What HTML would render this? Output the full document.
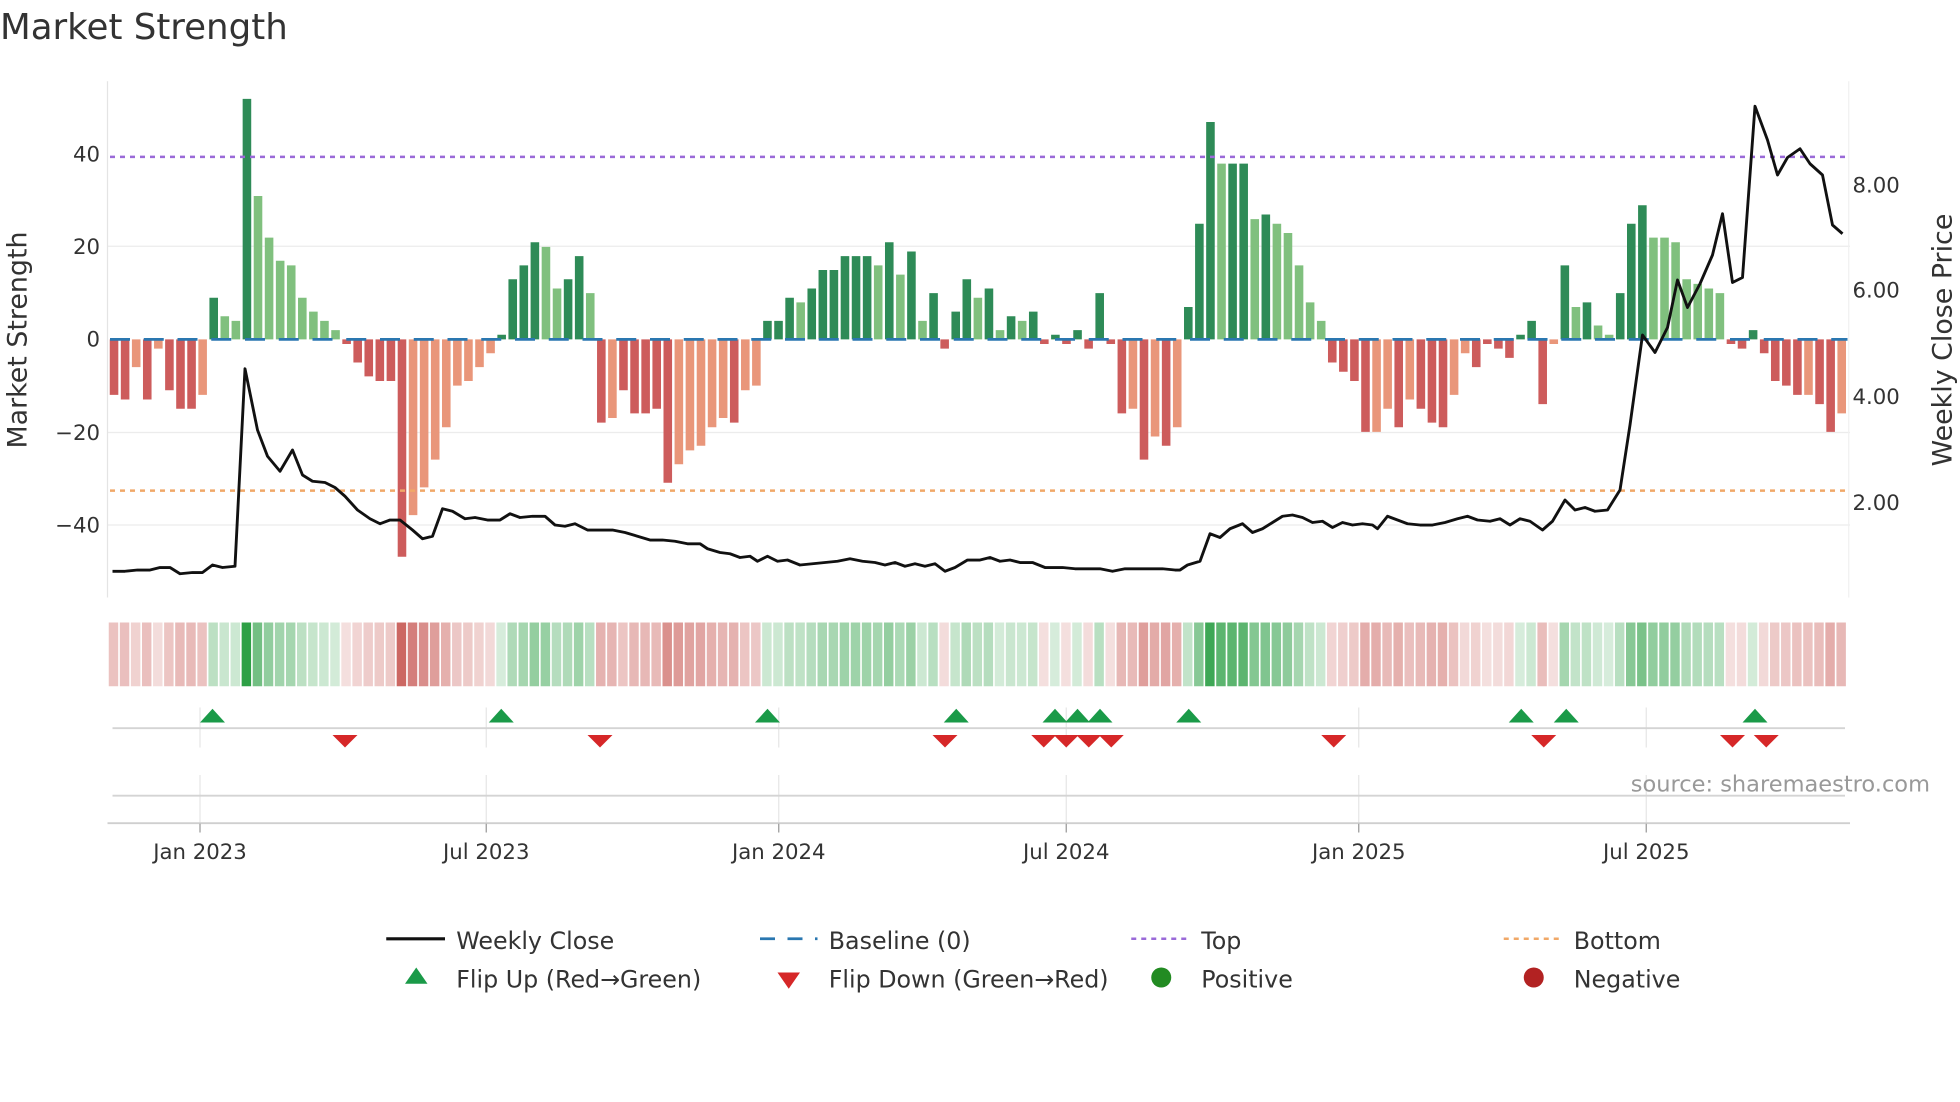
<!DOCTYPE html>
<html><head><meta charset="utf-8"><style>
html,body{margin:0;padding:0;background:#fff;width:1960px;height:1102px;overflow:hidden}
svg{display:block}
text{font-family:"DejaVu Sans","Liberation Sans",sans-serif;fill:#333}
</style></head><body>
<svg id="s" width="1960" height="1102" viewBox="0 0 1568 881.6" xmlns="http://www.w3.org/2000/svg">
<text x="0" y="31" font-size="28.5">Market Strength</text>
<g id="grid" stroke="#ececec" stroke-width="1">
<line x1="86" y1="197" x2="1480" y2="197"/><line x1="86" y1="346" x2="1480" y2="346"/><line x1="86" y1="420" x2="1480" y2="420"/>
</g>
<line x1="86" y1="65" x2="86" y2="478" stroke="#e4e4e4"/>
<line x1="1479" y1="65" x2="1479" y2="478" stroke="#f0f0f0"/>
<g font-size="17" text-anchor="end">
<text x="80" y="129">40</text><text x="80" y="203">20</text><text x="80" y="277">0</text><text x="80" y="352">−20</text><text x="80" y="426">−40</text>
</g>
<g font-size="17">
<text x="1482" y="154">8.00</text><text x="1482" y="238">6.00</text><text x="1482" y="323">4.00</text><text x="1482" y="408">2.00</text>
</g>
<text transform="translate(21,272) rotate(-90)" font-size="21.5" text-anchor="middle">Market Strength</text>
<text transform="translate(1561,272) rotate(-90)" font-size="21.5" text-anchor="middle">Weekly Close Price</text>
<g id="bars"></g>
<line x1="88" y1="271.5" x2="1478" y2="271.5" stroke="#2a77b0" stroke-width="2.2" stroke-dasharray="16,11"/>
<line x1="88" y1="125.5" x2="1478" y2="125.5" stroke="#9a6ad8" stroke-width="2" stroke-dasharray="4,4"/>
<line x1="88" y1="392.5" x2="1478" y2="392.5" stroke="#f0a868" stroke-width="2" stroke-dasharray="4,4"/>
<polyline fill="none" stroke="#111" stroke-width="2.3" stroke-linejoin="round" points="90,457 100,457 110,456 120,456 128,454 136,454 144,459 154,458 162,458 170,452 178,454 188,453 196,295 206,344 214,365 224,377 234,360 242,380 250,385 260,386 268,390 276,397 286,408 296,415 304,419 312,416 320,416 330,424 338,431 346,429 354,407 362,409 372,415 380,414 390,416 400,416 408,411 416,414 426,413 436,413 444,420 452,421 460,419 470,424 478,424 490,424 500,426 510,429 520,432 530,432 540,433 550,435 560,435 566,439 576,442 584,443 592,446 600,445 606,449 614,445 622,449 630,448 640,452 650,451 660,450 670,449 680,447 690,449 700,450 708,452 716,450 724,453 732,451 740,453 748,451 756,457 764,454 774,448 784,448 792,446 800,449 808,448 816,450 826,450 836,454 850,454 860,455 870,455 880,455 890,457 900,455 910,455 920,455 930,455 940,456 944,456 950,452 960,449 968,427 976,430 984,423 994,419 1002,426 1010,423 1018,418 1026,413 1034,412 1042,414 1050,418 1058,417 1066,422 1074,418 1082,420 1090,419 1098,420 1102,423 1110,413 1118,416 1126,419 1136,420 1146,420 1156,418 1166,415 1174,413 1182,416 1192,417 1200,415 1208,420 1216,415 1224,417 1234,424 1242,417 1252,400 1260,408 1268,406 1276,409 1286,408 1296,392 1304,340 1314,268 1324,282 1334,262 1342,224 1350,246 1360,227 1370,204 1378,171 1386,226 1394,222 1404,85 1414,112 1422,140 1430,126 1440,119 1448,131 1458,140 1466,180 1474,187"/>
<g id="heat"></g>
<g stroke="#e6e6e6" stroke-width="1">
<line x1="160" y1="566" x2="160" y2="598"/><line x1="389" y1="566" x2="389" y2="598"/><line x1="623" y1="566" x2="623" y2="598"/><line x1="853" y1="566" x2="853" y2="598"/><line x1="1087" y1="566" x2="1087" y2="598"/><line x1="1317" y1="566" x2="1317" y2="598"/>
<line x1="160" y1="620" x2="160" y2="658"/><line x1="389" y1="620" x2="389" y2="658"/><line x1="623" y1="620" x2="623" y2="658"/><line x1="853" y1="620" x2="853" y2="658"/><line x1="1087" y1="620" x2="1087" y2="658"/><line x1="1317" y1="620" x2="1317" y2="658"/>
</g>
<line x1="90" y1="582.5" x2="1476" y2="582.5" stroke="#d4d4d4" stroke-width="1.5"/>
<line x1="90" y1="636.5" x2="1476" y2="636.5" stroke="#d4d4d4" stroke-width="1.5"/>
<line x1="86" y1="658.5" x2="1480" y2="658.5" stroke="#cfcfcf" stroke-width="1.5"/>
<g stroke="#999" stroke-width="1"><line x1="160" y1="659" x2="160" y2="666"/><line x1="389" y1="659" x2="389" y2="666"/><line x1="623" y1="659" x2="623" y2="666"/><line x1="853" y1="659" x2="853" y2="666"/><line x1="1087" y1="659" x2="1087" y2="666"/><line x1="1317" y1="659" x2="1317" y2="666"/></g>
<g id="flips"></g>
<text x="1544" y="633" font-size="18" text-anchor="end" style="fill:#999">source: sharemaestro.com</text>
<g font-size="17" text-anchor="middle">
<text x="160" y="687">Jan 2023</text><text x="389" y="687">Jul 2023</text><text x="623" y="687">Jan 2024</text><text x="853" y="687">Jul 2024</text><text x="1087" y="687">Jan 2025</text><text x="1317" y="687">Jul 2025</text>
</g>
<g font-size="19">
<line x1="309" y1="751" x2="356" y2="751" stroke="#111" stroke-width="2.5"/><text x="365" y="759">Weekly Close</text>
<line x1="608" y1="751" x2="654" y2="751" stroke="#2a77b0" stroke-width="2.2" stroke-dasharray="12,10"/><text x="663" y="759">Baseline (0)</text>
<line x1="905" y1="751" x2="951" y2="751" stroke="#9a6ad8" stroke-width="2" stroke-dasharray="4,4"/><text x="961" y="759">Top</text>
<line x1="1203" y1="751" x2="1249" y2="751" stroke="#f0a868" stroke-width="2" stroke-dasharray="4,4"/><text x="1259" y="759">Bottom</text>
<polygon points="324,787 342,787 333,774" fill="#1a9a48"/><text x="365" y="790">Flip Up (Red→Green)</text>
<polygon points="622,778 640,778 631,791" fill="#d62728"/><text x="663" y="790">Flip Down (Green→Red)</text>
<circle cx="929" cy="782" r="8" fill="#228b22"/><text x="961" y="790">Positive</text>
<circle cx="1227" cy="782" r="8" fill="#b22222"/><text x="1259" y="790">Negative</text>
</g>
</svg>
<script>
var V=[[-12,1],[-13,1],[-6,0],[-13,1],[-2,0],[-11,1],[-15,1],[-15,1],[-12,0],[9,1],[5,0],[4,0],[52,1],[31,0],[22,0],[17,0],[16,0],[9,0],[6,0],[4,0],[2,0],[-1,1],[-5,1],[-8,1],[-9,1],[-9,1],[-47,1],[-38,0],[-32,0],[-26,0],[-19,0],[-10,0],[-9,0],[-6,0],[-3,0],[1,1],[13,1],[16,1],[21,1],[20,0],[11,0],[13,1],[18,1],[10,0],[-18,1],[-17,0],[-11,1],[-16,1],[-16,1],[-15,1],[-31,1],[-27,0],[-24,0],[-23,0],[-19,0],[-17,0],[-18,1],[-11,0],[-10,0],[4,1],[4,1],[9,1],[8,0],[11,1],[15,1],[15,1],[18,1],[18,1],[18,1],[16,0],[21,1],[14,0],[19,1],[4,0],[10,1],[-2,1],[6,1],[13,1],[9,0],[11,1],[2,0],[5,1],[4,0],[6,1],[-1,1],[1,1],[-1,1],[2,1],[-2,1],[10,1],[-1,1],[-16,1],[-15,0],[-26,1],[-21,0],[-23,1],[-19,0],[7,1],[25,1],[47,1],[38,0],[38,1],[38,1],[26,0],[27,1],[25,0],[23,0],[16,0],[8,0],[4,0],[-5,1],[-7,1],[-9,1],[-20,1],[-20,0],[-15,0],[-19,1],[-13,0],[-15,1],[-18,1],[-19,1],[-12,0],[-3,0],[-6,1],[-1,1],[-2,1],[-4,1],[1,1],[4,1],[-14,1],[-1,0],[16,1],[7,0],[8,1],[3,0],[1,0],[10,1],[25,1],[29,1],[22,0],[22,0],[21,0],[13,0],[12,0],[11,0],[10,0],[-1,1],[-2,1],[2,1],[-3,1],[-9,1],[-10,1],[-12,1],[-12,0],[-14,1],[-20,1],[-16,0]];
var ns="http://www.w3.org/2000/svg",b=document.getElementById('bars'),h=document.getElementById('heat');
function r(g,x,y,w,hh,f){var e=document.createElementNS(ns,'rect');e.setAttribute('x',x);e.setAttribute('y',y);e.setAttribute('width',w);e.setAttribute('height',hh);e.setAttribute('fill',f);g.appendChild(e);}
var n=V.length,x0=87,st=(1478-87)/n;
V.forEach(function(p,i){var v=p[0],x=x0+i*st,y0=271.5,hy=v*3.7;
var f=v>=0?(p[1]?'#2e8b57':'#80c07e'):(p[1]?'#cd5c5c':'#e9967a');
if(v>=0)r(b,x+0.8,y0-hy,st-2,hy,f);else r(b,x+0.8,y0,st-2,-hy,f);
var t=Math.min(1,0.18+0.82*Math.abs(v)/52),c=v>=0?[46,160,70]:[200,90,85];
var col='rgb('+c.map(function(k){return Math.round(255-(255-k)*t)}).join(',')+')';
r(h,x,498,st-1.3,51,col);});
var f=document.getElementById('flips');
[170,401,614,765,844,862,880,951,1217,1253,1404].forEach(function(x){var e=document.createElementNS(ns,'polygon');e.setAttribute('points',(x-10)+',578 '+(x+10)+',578 '+x+',567');e.setAttribute('fill','#1a9a48');f.appendChild(e);});
[276,480,756,835,853,871,889,1067,1235,1386,1413].forEach(function(x){var e=document.createElementNS(ns,'polygon');e.setAttribute('points',(x-10)+',588 '+(x+10)+',588 '+x+',598');e.setAttribute('fill','#d62728');f.appendChild(e);});
</script>
</body></html>
